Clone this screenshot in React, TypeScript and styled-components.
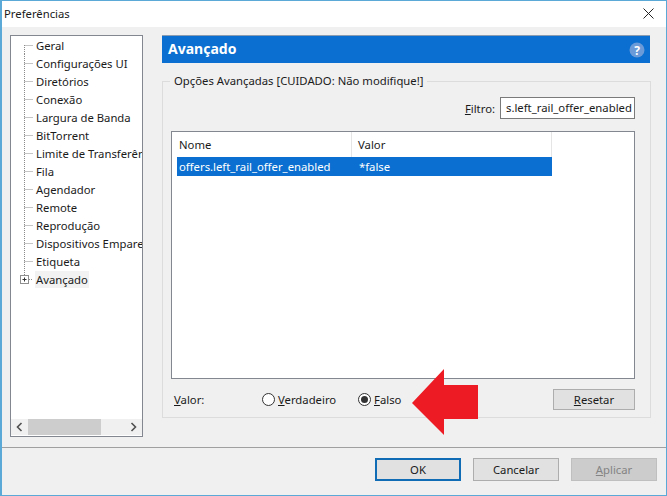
import React from "react";
import styled, { createGlobalStyle } from "styled-components";

const Global = createGlobalStyle`
  html, body { margin: 0; padding: 0; background: #f0f0f0; }
  * { box-sizing: border-box; }
  body { font-family: "Noto Sans", "Open Sans", sans-serif; font-size: 11.3px; color: #1a1a1a; }
`;

const Win = styled.div`
  position: relative;
  width: 667px;
  height: 496px;
  border: 1px solid #5aa9d6;
  border-left-width: 2px;
  background: #f0f0f0;
  display: flex;
  flex-direction: column;
  overflow: hidden;
`;
const TitleBar = styled.div`
  height: 26px;
  background: #fff;
  display: flex;
  align-items: center;
  justify-content: space-between;
  padding: 0 12px 2px 2px;
`;
const Main = styled.div`
  height: 420px;
  display: flex;
  padding: 8px 0 0 8px;
  gap: 19px;
`;
const Tree = styled.div`
  width: 133px;
  height: 402px;
  background: #fff;
  border: 1px solid #828790;
  display: flex;
  flex-direction: column;
  justify-content: space-between;
`;
const TreeList = styled.div`
  padding-top: 0;
  display: flex;
  flex-direction: column;
`;
const TreeRow = styled.div`
  height: 18px;
  display: flex;
  align-items: center;
  white-space: nowrap;
  overflow: hidden;
`;
const TreeLabel = styled.span<{ $active?: boolean }>`
  margin-left: 1px;
  padding: 0 1px;
  line-height: 17px;
  background: ${(p) => (p.$active ? "#f2f2f2" : "transparent")};
`;
const Scroll = styled.div`
  height: 16px;
  margin: 0 0 1px;
  background: #f0f0f0;
  display: flex;
  align-items: center;
  justify-content: space-between;
`;
const ScrollArrow = styled.div`
  width: 17px;
  height: 16px;
  display: flex;
  align-items: center;
  justify-content: center;
`;
const ScrollTrack = styled.div`
  flex: 1;
  height: 16px;
`;
const ScrollThumb = styled.div`
  width: 73px;
  height: 16px;
  background: #cdcdcd;
`;
const Right = styled.div`
  width: 489px;
  display: flex;
  flex-direction: column;
`;
const Banner = styled.div`
  height: 28px;
  width: 488px;
  background: #0a6fd0;
  border-top: 1px solid #8c9cb0;
  color: #fff;
  font-weight: 700;
  font-size: 14px;
  display: flex;
  align-items: center;
  justify-content: space-between;
  padding: 0 5px 0 6px;
`;
const BannerTitle = styled.span`
  margin-bottom: 3px;
`;
const Group = styled.fieldset`
  margin: 10px 0 0;
  padding: 8px 15px 8px 8px;
  height: 345px;
  border: 1px solid #dcdcdc;
  min-width: 0;
  display: flex;
  flex-direction: column;
`;
const Legend = styled.legend`
  margin-left: -1px;
  padding: 0 4px;
  line-height: 16px;
`;
const FilterRow = styled.div`
  display: flex;
  justify-content: flex-end;
  align-items: center;
  gap: 5px;
  height: 22px;
`;
const Input = styled.div`
  width: 135px;
  height: 22px;
  border: 1px solid #7a7a7a;
  background: #fff;
  padding: 0 0 0 5px;
  line-height: 20px;
  white-space: nowrap;
  overflow: hidden;
`;
const ListBox = styled.div`
  margin-top: 12px;
  height: 248px;
  border: 1px solid #828790;
  background: #fff;
  padding-top: 0;
`;
const ListHead = styled.div`
  display: flex;
  height: 25px;
`;
const HeadCell = styled.div<{ $w: number }>`
  width: ${(p) => p.$w}px;
  padding-left: ${(p) => (p.$w > 190 ? 6 : 7)}px;
  border-right: 1px solid #e5e5e5;
  line-height: 26px;
`;
const SelRow = styled.div`
  display: flex;
  margin-left: 5px;
  width: 375px;
  height: 19px;
  background: #0a6fd0;
  color: #fff;
  line-height: 19px;
`;
const SelCell = styled.div<{ $w: number }>`
  width: ${(p) => p.$w}px;
  padding-left: 2px;
  white-space: nowrap;
`;
const ValueRow = styled.div`
  flex: 1;
  display: flex;
  align-items: center;
  margin-top: 10px;
  height: 21px;
`;
const ValueLabel = styled.div`
  margin-left: 3px;
  width: 88px;
`;
const Radio = styled.label<{ $w: number }>`
  display: flex;
  align-items: center;
  gap: 3px;
  width: ${(p) => p.$w}px;
`;
const RadioDot = styled.span<{ $on?: boolean }>`
  width: 13px;
  height: 13px;
  border-radius: 50%;
  border: 1px solid #333;
  background: #fff;
  display: flex;
  align-items: center;
  justify-content: center;
  &::after {
    content: "";
    width: 7px;
    height: 7px;
    border-radius: 50%;
    background: ${(p) => (p.$on ? "#333" : "transparent")};
  }
`;
const Spacer = styled.div`
  flex: 1;
`;
const Btn = styled.div<{ $kind?: "default" | "disabled" }>`
  width: 86px;
  height: 23px;
  display: flex;
  align-items: center;
  justify-content: center;
  background: ${(p) => (p.$kind === "disabled" ? "#cccccc" : "#e1e1e1")};
  color: ${(p) => (p.$kind === "disabled" ? "#838383" : "#1a1a1a")};
  border: ${(p) =>
    p.$kind === "default"
      ? "2px solid #0f6cb5"
      : p.$kind === "disabled"
        ? "1px solid #bfbfbf"
        : "1px solid #adadad"};
`;
const ResetBtn = styled(Btn)`
  width: 82px;
  height: 21px;
`;
const Footer = styled.div`
  flex: 1;
  border-top: 1px solid #a0a0a0;
  display: flex;
  justify-content: flex-end;
  gap: 12px;
  padding: 10px 9px 0 0;
`;
const U = styled.span`
  text-decoration: underline;
`;
const Arrow = styled.svg`
  position: absolute;
  left: 410px;
  top: 368px;
`;

const items = [
  "Geral",
  "Configurações UI",
  "Diretórios",
  "Conexão",
  "Largura de Banda",
  "BitTorrent",
  "Limite de Transferênc",
  "Fila",
  "Agendador",
  "Remote",
  "Reprodução",
  "Dispositivos Emparelh",
  "Etiqueta",
  "Avançado",
];

function Connector({ index, last }: { index: number; last: boolean }) {
  return (
    <svg width="23" height="18" viewBox="0 0 23 18" style={{ flex: "none" }}>
      <path
        d={
          index === 0
            ? "M13.5 9V18M13.5 9.5H22"
            : last
              ? "M13.5 0V5M18 9.5H22"
              : "M13.5 0V18M13.5 9.5H22"
        }
        stroke="#8a8a8a"
        strokeDasharray="1 1"
        fill="none"
      />
      {last && (
        <g fill="none">
          <rect x="9.5" y="5.5" width="8" height="8" stroke="#8e8e8e" />
          <path d="M11.5 9.5H15.5M13.5 7.5V11.5" stroke="#333" />
        </g>
      )}
    </svg>
  );
}

export default function App() {
  return (
    <>
      <Global />
      <Win>
        <TitleBar>
          <span>Preferências</span>
          <svg width="11" height="11" viewBox="0 0 11 11">
            <path d="M0.5 0.5L10.5 10.5M10.5 0.5L0.5 10.5" stroke="#222" strokeWidth="1" />
          </svg>
        </TitleBar>
        <Main>
          <Tree>
            <TreeList>
              {items.map((t, i) => (
                <TreeRow key={t}>
                  <Connector index={i} last={i === items.length - 1} />
                  <TreeLabel $active={i === items.length - 1}>{t}</TreeLabel>
                </TreeRow>
              ))}
            </TreeList>
            <Scroll>
              <ScrollArrow>
                <svg width="7" height="10" viewBox="0 0 7 10">
                  <path d="M5.5 1L1.5 5L5.5 9" fill="none" stroke="#505050" strokeWidth="1.6" />
                </svg>
              </ScrollArrow>
              <ScrollTrack>
                <ScrollThumb />
              </ScrollTrack>
              <ScrollArrow>
                <svg width="7" height="10" viewBox="0 0 7 10">
                  <path d="M1.5 1L5.5 5L1.5 9" fill="none" stroke="#505050" strokeWidth="1.6" />
                </svg>
              </ScrollArrow>
            </Scroll>
          </Tree>
          <Right>
            <Banner>
              <BannerTitle>Avançado</BannerTitle>
              <svg width="16" height="16" viewBox="0 0 16 16">
                <circle cx="8" cy="8" r="7.5" fill="#6a9ad8" />
                <text x="8" y="12.5" textAnchor="middle" fill="#fff" fontSize="12" fontWeight="700" fontFamily="Noto Sans, sans-serif">?</text>
              </svg>
            </Banner>
            <Group>
              <Legend>Opções Avançadas [CUIDADO: Não modifique!]</Legend>
              <FilterRow>
                <span><U>F</U>iltro:</span>
                <Input>s.left_rail_offer_enabled</Input>
              </FilterRow>
              <ListBox>
                <ListHead>
                  <HeadCell $w={180}>Nome</HeadCell>
                  <HeadCell $w={200}>Valor</HeadCell>
                </ListHead>
                <SelRow>
                  <SelCell $w={180}>offers.left_rail_offer_enabled</SelCell>
                  <SelCell $w={195}>*false</SelCell>
                </SelRow>
              </ListBox>
              <ValueRow>
                <ValueLabel><U>V</U>alor:</ValueLabel>
                <Radio $w={96}>
                  <RadioDot />
                  <span><U>V</U>erdadeiro</span>
                </Radio>
                <Radio $w={60}>
                  <RadioDot $on />
                  <span><U>F</U>also</span>
                </Radio>
                <Spacer />
                <ResetBtn><span><U>R</U>esetar</span></ResetBtn>
              </ValueRow>
            </Group>
          </Right>
        </Main>
        <Footer>
          <Btn $kind="default">OK</Btn>
          <Btn>Cancelar</Btn>
          <Btn $kind="disabled"><span><U>A</U>plicar</span></Btn>
        </Footer>
        <Arrow width="70" height="68" viewBox="0 0 70 68">
          <path d="M0 34L32 0V16H66V50H32V66Z" fill="#ed1c24" />
        </Arrow>
      </Win>
    </>
  );
}
